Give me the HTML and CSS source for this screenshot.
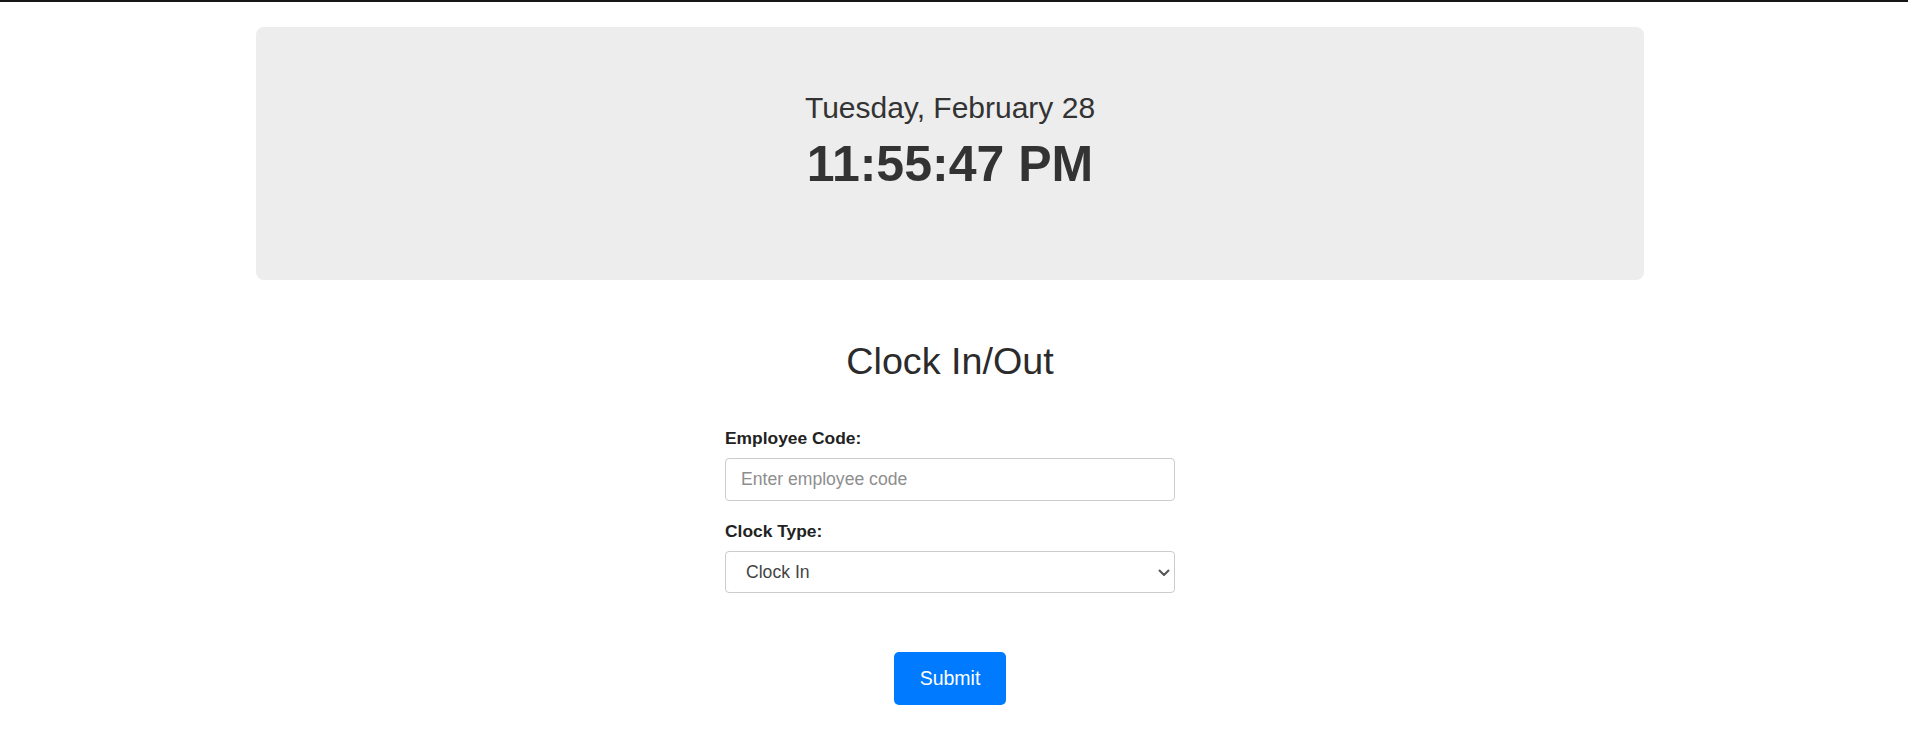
FILE: index.html
```html
<!DOCTYPE html>
<html lang="en">
<head>
<meta charset="utf-8">
<title>Clock In/Out</title>
<link rel="stylesheet" href="styles.css">
</head>
<body>
<div class="page">
  <section class="clock-panel">
    <div class="clock-date">Tuesday, February 28</div>
    <div class="clock-time">11:55:47 PM</div>
  </section>

  <h1 class="form-title">Clock In/Out</h1>

  <form class="clock-form">
    <label class="field-label" for="code">Employee Code:</label>
    <input class="field-input" id="code" type="text" placeholder="Enter employee code">

    <label class="field-label field-label-second" for="type">Clock Type:</label>
    <div class="select-wrap">
      <select class="field-input field-select" id="type">
        <option>Clock In</option>
        <option>Clock Out</option>
      </select>
      <svg class="select-chevron" width="12" height="8" viewBox="0 0 12 8" aria-hidden="true">
        <path d="M1.5 1.5 L6 6 L10.5 1.5" fill="none" stroke="#555555" stroke-width="2" stroke-linecap="round" stroke-linejoin="round"/>
      </svg>
    </div>

    <div class="form-actions">
      <button class="submit-btn" type="button">Submit</button>
    </div>
  </form>
</div>
</body>
</html>
```

FILE: styles.css
```css
html, body {
  margin: 0;
  padding: 0;
  background: #ffffff;
}

body {
  border-top: 2px solid #161616;
  font-family: "Liberation Sans", Arial, sans-serif;
  color: #333333;
}

.page {
  margin-right: 8px;
  display: flex;
  flex-direction: column;
  align-items: center;
}

.clock-panel {
  box-sizing: border-box;
  width: 1388px;
  height: 253px;
  margin-top: 25px;
  padding-top: 63px;
  background: #ededed;
  border-radius: 8px;
  display: flex;
  flex-direction: column;
  align-items: center;
}

.clock-date {
  font-size: 30px;
  line-height: 36px;
  color: #333333;
}

.clock-time {
  margin-top: 10px;
  font-size: 50px;
  line-height: 56px;
  font-weight: bold;
  color: #333333;
}

.form-title {
  margin: 59px 0 0;
  font-size: 37.7px;
  line-height: 44px;
  font-weight: normal;
  color: #2b2b2b;
}

.clock-form {
  width: 450px;
  margin-top: 45px;
  display: flex;
  flex-direction: column;
}

.field-label {
  font-size: 17.4px;
  line-height: 21px;
  font-weight: bold;
  color: #222222;
}

.field-label-second {
  margin-top: 20px;
}

.field-input {
  box-sizing: border-box;
  width: 100%;
  height: 42.5px;
  margin-top: 9px;
  padding: 0 15px;
  border: 1px solid #cccccc;
  border-radius: 4px;
  background: #ffffff;
  font-family: "Liberation Sans", Arial, sans-serif;
  font-size: 17.6px;
  color: #444444;
  outline: none;
}

.field-input::placeholder {
  color: #8e8e8e;
}

.select-wrap {
  position: relative;
}

.field-select {
  -webkit-appearance: none;
  appearance: none;
  padding-left: 20px;
  padding-right: 30px;
}

.select-chevron {
  position: absolute;
  right: 5px;
  top: 27px;
  pointer-events: none;
}

.form-actions {
  display: flex;
  justify-content: center;
  margin-top: 59px;
}

.submit-btn {
  height: 53px;
  width: 112px;
  padding: 0;
  border: none;
  border-radius: 5px;
  background: #007bff;
  color: #ffffff;
  font-family: "Liberation Sans", Arial, sans-serif;
  font-size: 19.5px;
  cursor: pointer;
}
```
